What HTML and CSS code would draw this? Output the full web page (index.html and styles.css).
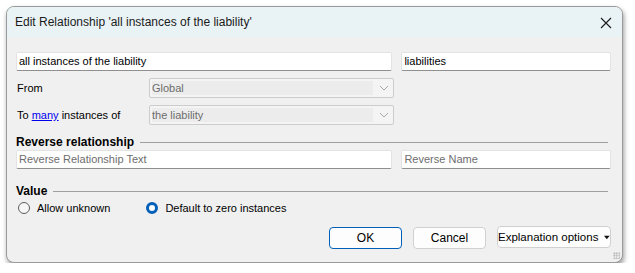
FILE: index.html
```html
<!DOCTYPE html>
<html lang="en">
<head>
    <meta charset="UTF-8">
    <title>Edit Relationship</title>
    <link rel="stylesheet" href="styles.css">
</head>
<body>
    <div class="dlg">
        <div class="titlebar">
            <span class="caption">Edit Relationship 'all instances of the liability'</span>
            <svg class="close" width="12" height="12" viewBox="0 0 12 12"><path d="M1 1L11 11M11 1L1 11" stroke="#1a1a1a" stroke-width="1.1" fill="none"/></svg>
        </div>
        <div class="content">
            <div class="row first">
                <div class="txt wide">all instances of the liability</div>
                <div class="txt narrow">liabilities</div>
            </div>
            <div class="row lbl">
                <span class="label">From</span>
                <div class="combo"><span class="val">Global</span><span class="chev"><svg width="10" height="6" viewBox="0 0 10 6"><path d="M1 1L5 5L9 1" stroke="#a8a8a8" fill="none"/></svg></span></div>
            </div>
            <div class="row lbl">
                <span class="label">To <a href="#">many</a> instances of</span>
                <div class="combo"><span class="val">the liability</span><span class="chev"><svg width="10" height="6" viewBox="0 0 10 6"><path d="M1 1L5 5L9 1" stroke="#a8a8a8" fill="none"/></svg></span></div>
            </div>
            <div class="group g1"><b>Reverse relationship</b><i></i></div>
            <div class="row">
                <div class="txt wide ph">Reverse Relationship Text</div>
                <div class="txt narrow ph">Reverse Name</div>
            </div>
            <div class="group g2"><b>Value</b><i></i></div>
            <div class="radios">
                <label class="radio"><span class="dot"></span>Allow unknown</label>
                <label class="radio on"><span class="dot"></span>Default to zero instances</label>
            </div>
            <div class="buttons">
                <div class="btn def">OK</div>
                <div class="btn">Cancel</div>
                <div class="btn menu">Explanation options<svg class="arr" width="8" height="5" viewBox="0 0 8 5"><path d="M0 0H8L4 5Z" fill="#111"/></svg></div>
            </div>
            <div class="grip"></div>
        </div>
    </div>
</body>
</html>
```

FILE: styles.css
```css
body{margin: 0; background-color: #fff; font-family: "Liberation Sans", Arial, sans-serif; font-size: 11px; color: #000;}
.dlg{width: 615px; height: 255px; margin: 6px 0 0 6px; border: 1px solid #9a9a9a; border-radius: 8px; background-color: #f0f0f0; box-shadow: 1px 3px 5px rgba(0,0,0,0.4); overflow: hidden; display: flex; flex-direction: column;}
.titlebar{height: 30px; background-color: #e9f3f6; display: flex; align-items: center; justify-content: space-between; padding: 0 10px 0 8px; flex-shrink: 0;}
.caption{font-size: 12px; color: #1b1b1b;}
.close{margin-top: 1px;}
.content{flex: 1; padding: 15px 11px 0 9px; position: relative;}
.row{display: flex; align-items: center;}
.row.lbl{margin-top: 7px;}
.txt{height: 17px; line-height: 17px; background-color: #fff; border: 1px solid #e3e3e3; border-bottom-color: #8f8f8f; border-radius: 2px; padding: 0 2px;}
.txt.wide{width: 373px;}
.txt.narrow{width: 205px; margin-left: 9px;}
.txt.ph{color: #6d6d6d;}
.label{width: 132px; padding-left: 1px;}
.label a{color: #0000ee;}
.combo{width: 243px; height: 18px; border: 1px solid #cccccc; border-radius: 2px; background-color: #f4f4f4; display: flex; align-items: center;}
.combo .val{flex: 1; height: 14px; line-height: 14px; margin: 0 2px; background-color: #ececec; color: #6d6d6d;}
.combo .chev{width: 18px; display: flex; justify-content: center;}
.group{display: flex; align-items: center; font-size: 12px; height: 14px;}
.group i{flex: 1; border-top: 1px solid #a0a0a0; margin: 1px 3px 0 6px;}
.g1{margin-top: 10px; margin-bottom: 1px;}
.g2{margin-top: 15px;}
.radios{display: flex; align-items: center; margin-top: 4px; padding-left: 2px;}
.radio{display: flex; align-items: center; margin-right: 36px;}
.radio .dot{width: 12px; height: 12px; box-sizing: border-box; border: 1px solid #5f5f5f; border-radius: 50%; background-color: #f6f6f6; margin-right: 7px;}
.radio.on .dot{border: 3.5px solid #005fb8; background-color: #fff;}
.buttons{display: flex; justify-content: flex-end; align-items: flex-start; margin-top: 13px;}
.btn{width: 71px; height: 20px; line-height: 20px; text-align: center; font-size: 12px; background-color: #fdfdfd; border: 1px solid #d0d0d0; border-radius: 4px; margin-left: 11px; white-space: nowrap;}
.btn.def{border-color: #005fb8;}
.btn.menu{width: 112px; margin-left: 11px; margin-top: -1px; font-size: 11.5px; display: flex; align-items: center; justify-content: center;}
.btn .arr{margin-left: 6px;}
.grip{position: absolute; right: 2px; bottom: 3px; width: 7px; height: 7px; background-image: radial-gradient(circle, #b8b8b8 0.8px, transparent 1px); background-size: 2.5px 2.5px;}
```
